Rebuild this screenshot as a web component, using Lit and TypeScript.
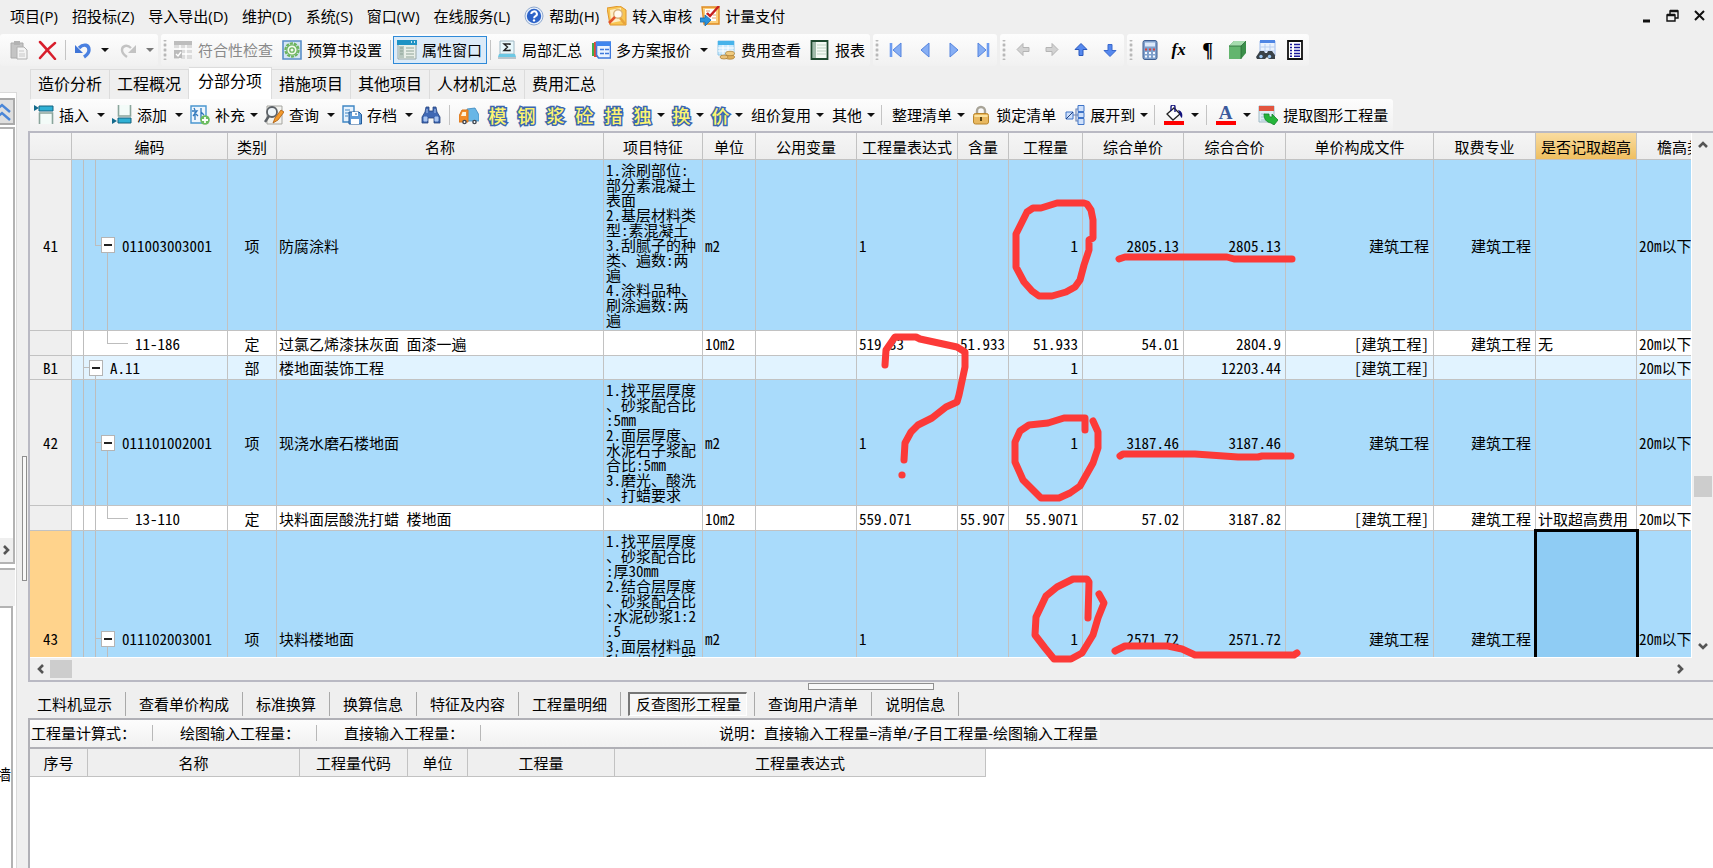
import { LitElement, html, svg, css, nothing, TemplateResult } from "lit";
import { customElement, property } from "lit/decorators.js";
import { classMap } from "lit/directives/class-map.js";

/* ---------- icons, all on a 20 x 20 grid ---------- */
const icons: Record<string, TemplateResult> = {
  help: svg`<circle cx="10" cy="10" r="9" fill="#e8f0fb" stroke="#8fa9cf"/><circle cx="10" cy="10" r="7.2" fill="#2d63c8"/><path d="M7.3 8a2.8 2.6 0 1 1 4.2 2.2c-1 .6-1.4 1-1.4 2" fill="none" stroke="#fff" stroke-width="2"/><circle cx="10" cy="14.4" r="1.2" fill="#fff"/>`,
  review: svg`<path d="M0 2l13-2 6 4v15L3 19z" fill="#f8c552" stroke="#e0962a"/><path d="M3 4l11-2v13l-10 2z" fill="#fdeec4"/><circle cx="11" cy="8" r="4.300" fill="#fffaf0" stroke="#d8b27a" stroke-width="1.400"/><path d="M8 11l-6 6" stroke="#e2522a" stroke-width="2.600"/><path d="M13 12l5 6" stroke="#e8a33a" stroke-width="2.600"/>`,
  pay: svg`<path d="M2 1h17v17H4z" fill="#fbcf7b" stroke="#e08c22" stroke-width="1.400"/><path d="M5 3h11v12H5z" fill="#fff"/><path d="M6 5h4M6 8h3M13 9h3M12 12h4" stroke="#e0a070"/><path d="M19 0l-9 10-3-3" fill="none" stroke="#c82020" stroke-width="2.400"/><path d="M0 12h5V9l6 5-6 6v-4H0z" fill="#2a93dc" stroke="#1867ad" stroke-width=".8"/>`,
  paste: svg`<path d="M2 3h12v15H2z" fill="#c4c4c4" stroke="#aaa"/><path d="M5 1h6v4H5z" fill="#b2b2b2"/><path d="M8 7h7l3 3v9H8z" fill="#f4f4f4" stroke="#b0b0b0"/><path d="M10 11h5M10 14h6M10 16h6" stroke="#c8c8c8"/>`,
  del: svg`<path d="M2 2c4 4 9 10 15 17M17 3C12 7 6 13 2 18" fill="none" stroke="#d81e2c" stroke-width="2.5" stroke-linecap="round"/>`,
  undo: svg`<path d="M6 8c5-5 10-3 10 2 0 3-2 5-5 7" fill="none" stroke="#4a80e0" stroke-width="3.400"/><path d="M2 5v8h8z" fill="#3f75d8"/>`,
  redo: svg`<path d="M13 8c-4-4-9-2-9 2 0 3 2 5 5 7" fill="none" stroke="#c3c3c3" stroke-width="2.4"/><path d="M18 5v8h-8z" fill="#c3c3c3"/>`,
  check: svg`<path d="M1 1h18v18H1z" fill="#dcdcdc"/><path d="M1 1h18v4H1z" fill="#bdbdbd"/><path d="M1 9h18M1 14h18M7 5v14M13 5v14" stroke="#fff" stroke-width="1.4"/><path d="M1 10h8v8H1z" fill="#bbb"/><path d="M3 14l2 2 3-4" fill="none" stroke="#fff" stroke-width="1.4"/>`,
  gear: svg`<path d="M1 1h18v18H1z" fill="#d5e6f5" stroke="#5a8fc8" stroke-width="1.600"/><circle cx="10" cy="10" r="6.600" fill="none" stroke="#6cb45e" stroke-width="2.200" stroke-dasharray="3.100 1"/><circle cx="10" cy="10" r="5.200" fill="#f3fbef" stroke="#6cb45e" stroke-width="1.200"/><circle cx="10" cy="10" r="2.200" fill="none" stroke="#6cb45e" stroke-width="1.300"/>`,
  props: svg`<path d="M1 1h18v18H1z" fill="#e9efe9" stroke="#97a7a7"/><path d="M0 0h20v5H0z" fill="#1f93c4"/><path d="M14 2h1M17 2h1" stroke="#fff" stroke-width="1.4"/><path d="M2 6h5v12H2z" fill="#b8c8c0"/><path d="M9 8h8M9 11h8M9 14h8M9 17h8M3 8h3M3 11h3M3 14h3" stroke="#8fa498"/>`,
  sigma: svg`<path d="M3 1h14v13H3z" fill="#e8f7fb" stroke="#9fb8c4"/><path d="M13 5V4H7l3.500 3L7 10.500h6v-1" fill="none" stroke="#222" stroke-width="1.400"/><path d="M2 14h16l1 3H1z" fill="#6cc8e4"/><path d="M1 17h18v2H1z" fill="#b9c4ca"/>`,
  plans: svg`<path d="M1 3h5v13H1z" fill="#3fae49"/><path d="M3 2h4v15H3z" fill="#e34b35"/><path d="M5.500 2h14v16h-12l-2-3z" fill="#eaf3ff" stroke="#3f79dc" stroke-width="1.600"/><path d="M5 2h15v4H5z" fill="#3f86ee"/><path d="M9 9.500h4M14 9.500h4M9 13.500h4M14 13.500h4" stroke="#3f79dc" stroke-width="1.500"/>`,
  fee: svg`<path d="M2 1h16v14H2z" fill="#cdeafc" stroke="#8ec6e8"/><path d="M2 1h16v4H2z" fill="#46b3ea"/><path d="M2 8h16M2 11h16M7 5v10M12 5v10" stroke="#fff"/><ellipse cx="14" cy="17" rx="4.500" ry="2.200" fill="#e0b05a" stroke="#a87a2c" stroke-width=".7"/><ellipse cx="14" cy="13.500" rx="4.500" ry="2.200" fill="#f0cb80" stroke="#a87a2c" stroke-width=".7"/><ellipse cx="8" cy="17" rx="4" ry="2" fill="#eac27a" stroke="#a87a2c" stroke-width=".7"/>`,
  report: svg`<path d="M1.500 1h16v18h-16z" fill="#f4faf4" stroke="#1f4a30" stroke-width="1.800"/><path d="M3 2v16M5 2v16" stroke="#4f7f62"/><path d="M7 5h9M7 8h9M7 11h9M7 14h9" stroke="#bcd3c2"/>`,
  first: svg`<path d="M5 3v14" stroke="#6d9cf0" stroke-width="2.600"/><path d="M15 3v14L7 10z" fill="#86aef4" stroke="#5584de"/>`,
  prev: svg`<path d="M14 3v14L6 10z" fill="#86aef4" stroke="#5584de"/>`,
  next: svg`<path d="M6 3v14l8-7z" fill="#86aef4" stroke="#5584de"/>`,
  last: svg`<path d="M15 3v14" stroke="#6d9cf0" stroke-width="2.600"/><path d="M5 3v14l8-7z" fill="#86aef4" stroke="#5584de"/>`,
  left: svg`<path d="M4 9.500l6-6v4h6v4h-6v4z" fill="#d2d2d2" stroke="#b4b4b4"/>`,
  right: svg`<path d="M16 9.500l-6-6v4H4v4h6v4z" fill="#d2d2d2" stroke="#b4b4b4"/>`,
  up: svg`<path d="M10 3.500l6 6h-4v6H8v-6H4z" fill="#5588ee" stroke="#2a59bd"/>`,
  down: svg`<path d="M10 16.500l6-6h-4v-6H8v6H4z" fill="#5588ee" stroke="#3a69cd"/>`,
  calc: svg`<rect x="3" y="0.500" width="14" height="19" rx="2" fill="#7fa0cc" stroke="#3f5f92"/><path d="M5 2.500h10v4H5z" fill="#dbe9fb"/><path d="M5 9.500h2M9 9.500h2M13 9.500h2" stroke="#d8413a" stroke-width="2"/><path d="M5 13h2M9 13h2M13 13h2M5 16.500h2M9 16.500h2M13 16.500h2" stroke="#f3f7ff" stroke-width="2"/>`,
  cube: svg`<path d="M2 6l5-5h12v12l-5 6H2z" fill="#3b8f4a"/><path d="M2 6h12v13H2z" fill="#63b56e"/><path d="M2 6l5-5h12l-5 5z" fill="#a6dcae"/><path d="M2 6h12v13M14 6l5-5" fill="none" stroke="#2a6b36" stroke-width=".8"/>`,
  findtable: svg`<path d="M4 1h15v15H4z" fill="#eaf2fd" stroke="#9fbcec"/><path d="M4 0h15v3H4z" fill="#4f86e4"/><path d="M4 7h15M4 11h15M9 4v11M14 4v11" stroke="#b9cff0"/><path d="M0 17l4-6h4l1 2h2l1-2h4l3 4v4h-6l-2-2-2 2H1z" fill="#3a4248"/><circle cx="5" cy="16.500" r="1.700" fill="#9cc8f3"/><circle cx="13.500" cy="16.500" r="1.700" fill="#9cc8f3"/>`,
  listdoc: svg`<path d="M3 1h14v18H3z" fill="#fff" stroke="#111" stroke-width="1.800"/><path d="M5 4.500h2M5 7.500h2M5 10.500h2M5 13.500h2M5 16.200h2M9 4.500h6M9 7.500h6M9 10.500h6M9 13.500h6M9 16.200h6" stroke="#1a1a9a" stroke-width="1.400"/>`,
  insert: svg`<path d="M0 0l5 3-5 3z" fill="#146a8c"/><path d="M5 1h14v5H5z" fill="#2fb0d4" stroke="#14627f"/><path d="M5.500 19V8h13v11" fill="#f3fbf8" stroke="#8aa59c" stroke-width="1.600"/>`,
  add: svg`<path d="M6.500 0v11h12V0" fill="#f3fbf8" stroke="#8aa59c" stroke-width="1.600"/><path d="M6 13h13v5H6z" fill="#2fb0d4" stroke="#14627f"/><path d="M0 13l5 3-5 3z" fill="#146a8c"/>`,
  supply: svg`<path d="M1 1h15v17H1z" fill="#eef6fd" stroke="#4a96d0" stroke-width="1.400"/><path d="M4 3l1 2M2 6h5L3 11M5 7v8M6 9l2 2M11 3v12M11 7l3 3" fill="none" stroke="#2f78bc" stroke-width="1.300"/><circle cx="15" cy="15" r="4.800" fill="#6cbc5f"/><path d="M12 15h6M15 12v6" stroke="#fff" stroke-width="1.800"/>`,
  query: svg`<path d="M3 1h15v18H3z" fill="#f2f2ee" stroke="#a5a5a0"/><circle cx="8" cy="7" r="5" fill="#eef4f8" stroke="#5c6166" stroke-width="1.800"/><path d="M5 11l-4 6" stroke="#5c6166" stroke-width="2.400"/><path d="M9 18l2-5 6-8 3 2-6 8z" fill="#f39a2b" stroke="#a85b10" stroke-width=".8"/>`,
  archive: svg`<path d="M1 1h11v16H1z" fill="#e6f2fd" stroke="#3f86c4" stroke-width="1.400"/><path d="M3 5h5M3 8h4M3 11h3" stroke="#3f86c4"/><path d="M7 7h10l2.500 2.500V19H7z" fill="#5f9bd8" stroke="#225a98"/><path d="M10 7h6v4h-6zM9 14h8v5H9z" fill="#fff"/><path d="M14 8v2" stroke="#225a98"/>`,
  find: svg`<path d="M5 2h3v4h4V2h3l1 5 3 5v6h-6v-5H7v5H1v-6l3-5z" fill="#3f68b4" stroke="#27457f" stroke-width=".8"/><path d="M3 12h3v4H3zM14 12h3v4h-3zM6 4v4M14 4v4" fill="#a8c4f0" stroke="#a8c4f0"/>`,
  truck: svg`<path d="M8 4l8-1 4 7v6H8z" fill="#68b6e6" stroke="#3a86bc" stroke-width=".8"/><path d="M3 5h6v12H0v-6z" fill="#f28c28" stroke="#d8761c"/><path d="M3.500 7H7v4H2z" fill="#fff1d8"/><circle cx="5.500" cy="17" r="2.300" fill="#3f4650"/><circle cx="15.500" cy="17" r="2.300" fill="#3f4650"/><circle cx="5.500" cy="17" r=".9" fill="#fff"/><circle cx="15.500" cy="17" r=".9" fill="#fff"/>`,
  lock: svg`<path d="M6 9V6a4 4 0 0 1 8 0v3" fill="none" stroke="#a8a498" stroke-width="2.400"/><rect x="2.500" y="8.500" width="15" height="10.500" rx="2" fill="#e8b860" stroke="#b9852a"/><path d="M3.500 11h13" stroke="#fbe3a0" stroke-width="2"/><path d="M10 12v4" stroke="#5b4312" stroke-width="2"/>`,
  expand: svg`<path d="M8 10h6M11 10V4h3M11 10v6h3" fill="none" stroke="#6f86b4" stroke-width="1.200"/><path d="M1 7h7v7H1zM13 0.500h6v6h-6zM13 7.500h6v5h-6zM13 13.500h6v6h-6z" fill="#cfe0fa" stroke="#3f74c8"/><path d="M1 14l7-7" stroke="#203f7c"/>`,
  bucket: svg`<path d="M3 9l7-6 6 6-7 6z" fill="#fff" stroke="#222" stroke-width="1.300"/><path d="M7 6V2a2 2 0 0 1 4 0v5" fill="none" stroke="#1a1a80" stroke-width="1.400"/><path d="M14 5c4 1 5 4 4 8-2-1-2-4-4-8z" fill="#10107c"/><path d="M0 16h20v4H0z" fill="#f00"/>`,
  extract: svg`<path d="M1 1h15v16H1z" fill="#dfeef4" stroke="#9fb9c4"/><path d="M1 1h15v5H1z" fill="#e2553f"/><path d="M3 9h4M3 12h4M3 15h5" stroke="#a8c4d0"/><path d="M6 9h5c0 3 1 3 3 3v-3l6 6-4 5-3-2c-5-1-7-4-7-9z" fill="#25b53a" stroke="#12842a" stroke-width=".8"/>`,
};

const icon = (name: string) =>
  html`<svg class="ico" viewBox="0 0 20 20" width="20" height="20" aria-hidden="true">${icons[name]}</svg>`;

const chevron = (dir: "up" | "down" | "left" | "right") => {
  const d = { up: "M2 8l4-4 4 4", down: "M2 4l4 4 4-4", left: "M8 2L4 6l4 4", right: "M4 2l4 4-4 4" }[dir];
  return html`<svg viewBox="0 0 12 12" width="12" height="12" aria-hidden="true"><path d=${d} fill="none" stroke="#555" stroke-width="2.600"/></svg>`;
};

const shared = css`
  * { box-sizing: border-box; }
  button {
    font: inherit; color: inherit; background: none; border: 0; margin: 0; padding: 0;
    display: inline-flex; align-items: center; justify-content: center; white-space: nowrap; flex: none;
  }
  svg { display: block; flex: none; }
`;

/* ---------- toolbars ---------- */
type Tool =
  | { k: "text"; icon?: string; label: string; state?: "pressed" | "disabled" }
  | { k: "icon"; icon?: string; glyph?: string; style?: string; label: string }
  | { k: "caret"; narrow?: boolean; dim?: boolean }
  | { k: "sep" };

const T = (label: string, ic?: string, state?: "pressed" | "disabled"): Tool => ({ k: "text", icon: ic, label, state });
const I = (ic: string, label: string): Tool => ({ k: "icon", icon: ic, label });
const G = (glyph: string, style: string, label: string): Tool => ({ k: "icon", glyph, style, label });
const SEP: Tool = { k: "sep" };
const CARET: Tool = { k: "caret" };
const NARROW: Tool = { k: "caret", narrow: true };

@customElement("tool-group")
class ToolGroup extends LitElement {
  @property({ attribute: false }) tools: Tool[] = [];
  @property({ type: Boolean }) grip = false;

  static styles = [shared, css`
    :host { display: flex; align-items: center; height: 32px; flex: none; border-radius: 3px;
      background: linear-gradient(#fdfdfd, #f1f1f1); }
    .grip { width: 8px; height: 20px; flex: none;
      background: radial-gradient(circle, #b4b4b4 1px, transparent 2px) center / 4px 5px repeat-y; }
    .text { height: 28px; padding: 0 5px 0 4px; gap: 5px; }
    .plain { padding-left: 6px; }
    .pressed { background: #dcebf8; box-shadow: inset 0 0 0 1px #2f8ad8; }
    .disabled { color: #8a8a8a; }
    .icon { width: 29px; height: 28px; }
    .sep { width: var(--sep, 6px); height: 20px; flex: none;
      background: linear-gradient(#c4c4c4, #c4c4c4) center / 1px 100% no-repeat; }
    .caret { width: var(--caret, 16px); height: 28px; }
    .narrow { width: 10px; justify-content: flex-start; }
    .dim { opacity: .55; }
    .seal { font: 500 18px/20px "Noto Sans CJK SC", sans-serif; color: #fdf470;
      -webkit-text-stroke: 3px #3a66b0; paint-order: stroke fill; }
    .fx { font: italic 700 17px/20px "Liberation Serif", serif; }
    .pilcrow { font: 700 20px/20px "Liberation Serif", serif; }
    .letter { font: 700 19px/16px "Liberation Serif", serif; color: #3c5a9c; width: 20px; border-bottom: 4px solid #f00; }
  `];

  private tool(t: Tool) {
    switch (t.k) {
      case "sep": return html`<span class="sep"></span>`;
      case "caret":
        return html`<button class=${classMap({ caret: true, narrow: !!t.narrow, dim: !!t.dim })} aria-label="▾">
          <svg viewBox="0 0 8 4" width="8" height="4"><path d="M0 0h8L4 4z" fill="#111"/></svg></button>`;
      case "icon":
        return html`<button class="icon" title=${t.label}>${t.icon ? icon(t.icon) : html`<span class=${t.style ?? ""}>${t.glyph}</span>`}</button>`;
      default:
        return html`<button class=${classMap({ text: true, plain: !t.icon, pressed: t.state === "pressed", disabled: t.state === "disabled" })}
          ?disabled=${t.state === "disabled"}>${t.icon ? icon(t.icon) : nothing}<span>${t.label}</span></button>`;
    }
  }

  render() {
    return html`${this.grip ? html`<span class="grip"></span>` : nothing}${this.tools.map((t) => this.tool(t))}`;
  }
}

const mainBar: { grip: boolean; tools: Tool[] }[] = [
  { grip: false, tools: [I("paste", "粘贴"), I("del", "删除"), SEP, I("undo", "撤销"), CARET, I("redo", "恢复"), { k: "caret", dim: true }] },
  { grip: true, tools: [T("符合性检查", "check", "disabled"), T("预算书设置", "gear"), SEP, T("属性窗口", "props", "pressed"), SEP,
    T("局部汇总", "sigma"), T("多方案报价", "plans"), CARET, T("费用查看", "fee"), T("报表", "report")] },
  { grip: true, tools: [I("first", "首行"), I("prev", "上一行"), I("next", "下一行"), I("last", "末行")] },
  { grip: true, tools: [I("left", "左移"), I("right", "右移"), I("up", "上移"), I("down", "下移")] },
  { grip: true, tools: [I("calc", "计算器"), G("fx", "fx", "函数"), G("¶", "pilcrow", "段落"), I("cube", "图形"), I("findtable", "查找"), I("listdoc", "清单")] },
];

const seal = (c: string) => G(c, "seal", c);
const editBar: Tool[] = [
  T("插入", "insert"), CARET, T("添加", "add"), CARET, T("补充", "supply"), NARROW, T("查询", "query"), CARET,
  T("存档", "archive"), CARET, I("find", "查找"), SEP, I("truck", "运输"), seal("模"), seal("钢"), seal("浆"), seal("砼"), seal("措"),
  seal("独"), NARROW, seal("换"), NARROW, seal("价"), NARROW, T("组价复用"), NARROW, T("其他"), NARROW, SEP,
  T("整理清单"), NARROW, T("锁定清单", "lock"), T("展开到", "expand"), NARROW, SEP, I("bucket", "填充颜色"), CARET, SEP,
  G("A", "letter", "字体颜色"), CARET, T("提取图形工程量", "extract"),
];

/* ---------- bill of quantities ---------- */
interface Row {
  no: string; kind: "item" | "quota" | "part"; guides: string[]; code: string; type: string; name: string;
  feature?: string[]; unit?: string; expr?: string; content?: string; qty: string; price?: string; total: string;
  file: string; trade?: string; high?: string; active?: boolean;
}

const columns: [string, number][] = [
  ["", 42], ["编码", 156], ["类别", 49], ["名称", 327], ["项目特征", 99], ["单位", 53], ["公用变量", 101], ["工程量表达式", 101],
  ["含量", 51], ["工程量", 74], ["综合单价", 101], ["综合合价", 102], ["单价构成文件", 148], ["取费专业", 102], ["是否记取超高", 101], ["檐高类型", 101],
];

const rows: Row[] = [
  { no: "41", kind: "item", guides: ["line", "last"], code: "011003003001", type: "项", name: "防腐涂料",
    feature: ["1.涂刷部位:", "部分素混凝土", "表面", "2.基层材料类", "型:素混凝土", "3.刮腻子的种", "类、遍数:两", "遍", "4.涂料品种、", "刷涂遍数:两", "遍"],
    unit: "m2", expr: "1", qty: "1", price: "2805.13", total: "2805.13", file: "建筑工程", trade: "建筑工程" },
  { no: "", kind: "quota", guides: ["line", "none"], code: "11-186", type: "定", name: "过氯乙烯漆抹灰面 面漆一遍", unit: "10m2",
    expr: "519.33", content: "51.933", qty: "51.933", price: "54.01", total: "2804.9", file: "[建筑工程]", trade: "建筑工程", high: "无" },
  { no: "B1", kind: "part", guides: ["tee"], code: "A.11", type: "部", name: "楼地面装饰工程", qty: "1", total: "12203.44", file: "[建筑工程]" },
  { no: "42", kind: "item", guides: ["line", "tee"], code: "011101002001", type: "项", name: "现浇水磨石楼地面",
    feature: ["1.找平层厚度", "、砂浆配合比", ":5mm", "2.面层厚度、", "水泥石子浆配", "合比:5mm", "3.磨光、酸洗", "、打蜡要求"],
    unit: "m2", expr: "1", qty: "1", price: "3187.46", total: "3187.46", file: "建筑工程", trade: "建筑工程" },
  { no: "", kind: "quota", guides: ["line", "line"], code: "13-110", type: "定", name: "块料面层酸洗打蜡 楼地面", unit: "10m2",
    expr: "559.071", content: "55.907", qty: "55.9071", price: "57.02", total: "3187.82", file: "[建筑工程]", trade: "建筑工程", high: "计取超高费用" },
  { no: "43", kind: "item", guides: ["line", "tee"], code: "011102003001", type: "项", name: "块料楼地面",
    feature: ["1.找平层厚度", "、砂浆配合比", ":厚30mm", "2.结合层厚度", "、砂浆配合比", ":水泥砂浆1:2", ".5", "3.面层材料品", "种、规格、颜", "色", "4.嵌缝材料种", "类", "5.防护层材料", "种类"],
    unit: "m2", expr: "1", qty: "1", price: "2571.72", total: "2571.72", file: "建筑工程", trade: "建筑工程", active: true },
];

@customElement("bill-grid")
class BillGrid extends LitElement {
  static styles = [shared, css`
    :host { display: grid; grid-template: minmax(0, 1fr) 22px / minmax(0, 1fr) 22px; min-height: 0; background: #efefef;
      border: solid #b9b9c3; border-width: 2px 0 2px 2px; }
    .view { overflow: hidden; background: #fff; border-bottom: 1px solid #fff; }
    table { border-collapse: separate; border-spacing: 0; table-layout: fixed; width: max-content; }
    th, td { padding: 0; height: 1px; border: solid #c2c2c2; border-width: 0 1px 1px 0; white-space: nowrap; overflow: hidden;
      font: 400 15px/15px "Noto Sans CJK SC", sans-serif; font-feature-settings: "hwid"; }
    thead th { height: 27px; background: linear-gradient(#f5f5f5, #ededed); }
    thead .lit { background: linear-gradient(#f9dca0, #efbf60); }
    tbody th { background: #efefef; }
    tbody .current { background: #ffd38c; }
    .quota { height: 25px; }
    .part { height: 24px; background: #e1f3ff; }
    .item { background: #a9dbfb; }
    td { padding: 0 4px 0 2px; }
    .mid { text-align: center; padding: 0; }
    .num { text-align: right; }
    .feature { padding: 2px 0 3px 2px; white-space: pre; }
    .active { background: #8fccf4; outline: 3px solid #000; outline-offset: -1px; position: relative; overflow: visible; }
    .code { padding: 0 0 0 5px; }
    .tree { display: flex; align-items: center; height: 100%; }
    .g { width: 12px; height: 100%; flex: none; background-repeat: no-repeat; --c: linear-gradient(#bdbdbd, #bdbdbd); }
    .line { background-image: var(--c); background-position: 6px 0; background-size: 1px 100%; }
    .tee { background-image: var(--c), var(--c); background-position: 6px 0, right center; background-size: 1px 100%, 6px 1px; }
    .last { background-image: var(--c), var(--c); background-position: 6px 0, right center; background-size: 1px 50%, 6px 1px; }
    .leaf { width: 27px; margin-right: 7px; background-image: var(--c), var(--c); background-position: 6px 0, right center; background-size: 1px 50%, 21px 1px; }
    .node { width: 14px; margin-right: 7px; display: flex; align-items: center; background-image: var(--c);
      background-position: 6px bottom; background-size: 1px 50%; }
    .fold { width: 14px; height: 16px; background: #fff; border: 1px solid #b4b4b4; }
    .fold::before { content: ""; width: 8px; height: 2px; background: #222; }
    .vbar { display: flex; flex-direction: column; align-items: center; border-left: 1px solid #fff; padding: 3px 0; }
    .hbar { display: flex; align-items: center; padding: 0 2px; }
    .vbar button, .hbar button { width: 18px; height: 18px; }
    .above { flex: 329; } .below { flex: 143; }
    .vthumb { width: 18px; height: 21px; background: #cdcdcd; }
    .hthumb { width: 22px; height: 18px; background: #cdcdcd; }
    .rest { flex: 1; }
  `];

  private row(r: Row) {
    return html`<tr class=${r.kind}>
      <th scope="row" class=${classMap({ current: !!r.active })}>${r.no}</th>
      <td class="code"><div class="tree">${r.guides.map((g) => html`<span class="g ${g}"></span>`)}
        ${r.kind === "quota" ? html`<span class="g leaf"></span>` : html`<span class="g node"><button class="fold" aria-label="折叠"></button></span>`}
        <span>${r.code}</span></div></td>
      <td class="mid">${r.type}</td><td>${r.name}</td><td class="feature">${r.feature?.join("\n")}</td><td>${r.unit}</td><td></td><td>${r.expr}</td>
      <td class="num">${r.content}</td><td class="num">${r.qty}</td><td class="num">${r.price}</td><td class="num">${r.total}</td>
      <td class="num">${r.file}</td><td class="num">${r.trade}</td><td class=${classMap({ active: !!r.active })}>${r.high}</td><td>20m以下</td>
    </tr>`;
  }

  render() {
    const total = columns.reduce((s, c) => s + c[1], 0);
    return html`
      <div class="view"><table style="width:${total}px">
        <colgroup>${columns.map((c) => html`<col style="width:${c[1]}px">`)}</colgroup>
        <thead><tr>${columns.map((c, i) => html`<th scope="col" class=${classMap({ lit: i === 14 })}>${c[0]}</th>`)}</tr></thead>
        <tbody>${rows.map((r) => this.row(r))}</tbody>
      </table></div>
      <div class="vbar"><button aria-label="向上滚动">${chevron("up")}</button><span class="above"></span><span class="vthumb"></span><span class="below"></span><button aria-label="向下滚动">${chevron("down")}</button></div>
      <div class="hbar"><button aria-label="向左滚动">${chevron("left")}</button><span class="hthumb"></span><span class="rest"></span><button aria-label="向右滚动">${chevron("right")}</button></div>`;
  }
}

/* ---------- hand-drawn marks laid over the sheet ---------- */
const strokes = [
  "M1084 203H1057L1041 208L1033 208L1027 212L1022 222L1016 234V267L1024 282L1032 291L1039 296H1052L1066 292L1075 287L1080 280L1084 265L1089 250V240L1093 238V220L1091 210L1087 204Z",
  "M1119 259L1125 257H1227L1234 259H1292",
  "M885 365L886 350L895 337H916L920 339L957 347L965 352V367L959 395L957 402L946 407L932 418L918 425L911 432L905 443L904 460",
  "M1085 430V418H1064L1048 423L1029 425L1020 431L1015 442V462L1023 480L1041 498H1059L1070 493L1080 486L1093 463L1098 448V432L1093 421",
  "M1120 456L1123 454H1195L1238 457H1258L1262 456H1291",
  "M1088 618L1089 582L1087 579H1073L1057 587L1046 596L1036 617L1035 635L1045 648L1054 659H1071L1082 653L1093 635L1098 618L1104 603L1099 594",
  "M1115 651L1125 646H1168L1182 649L1195 655H1294L1297 653",
];

const menus = ["项目(P)", "招投标(Z)", "导入导出(D)", "维护(D)", "系统(S)", "窗口(W)", "在线服务(L)"];
const sheetTabs = ["造价分析", "工程概况", "分部分项", "措施项目", "其他项目", "人材机汇总", "费用汇总"];
const detailTabs = ["工料机显示", "查看单价构成", "标准换算", "换算信息", "特征及内容", "工程量明细", "反查图形工程量", "查询用户清单", "说明信息"];
const detailCols: [string, number][] = [["序号", 58], ["名称", 212], ["工程量代码", 108], ["单位", 60], ["工程量", 147], ["工程量表达式", 371]];

@customElement("app-root")
class AppRoot extends LitElement {
  static styles = [shared, css`
    :host { display: flex; flex-direction: column; height: 100vh; position: relative; overflow: hidden; background: #efefef; color: #000;
      font: 15px/20px "Open Sans", "Noto Sans CJK SC", sans-serif; }
    .menu { display: flex; align-items: center; gap: 14px; height: 34px; padding: 0 5px 3px 10px; flex: none; }
    .menu button { gap: 5px; }
    .menu .withicon { margin-left: -6px; }
    .win { display: flex; gap: 8px; margin-left: auto; }
    .win button { width: 18px; height: 18px; }
    .bar { display: flex; gap: 3px; height: 32px; flex: none; }
    .bar tool-group:first-child { padding-left: 4px; }
    .body { display: flex; flex: 1; min-height: 0; }
    .side { width: 28px; flex: none; display: flex; margin-top: 26px; }
    .panes { width: 17px; flex: none; display: flex; flex-direction: column; overflow: hidden; border: solid #dadada; border-width: 1px 1px 0 0; background: #fff; }
    .collapse { width: 15px; height: 27px; margin: 5px 0 2px; background: #dfdfdf; border: solid #aaa; border-width: 2px 2px 2px 0; }
    .nav { width: 15px; flex: 1; display: flex; align-items: flex-end; border: solid #b3b3b3; border-width: 2px 2px 2px 0; }
    .nav button { width: 13px; height: 24px; background: #efefef; justify-content: flex-start; }
    .strip { width: 15px; height: 38px; flex: none; margin-top: 4px; background: #efefef; border-top: 2px solid #b3b3b3; }
    .preview { width: 13px; flex: 0 0 262px; display: flex; align-items: center; justify-content: flex-end; overflow: hidden; padding-top: 72px; border: solid #b3b3b3; border-width: 2px 2px 0 0; }
    .vsplit { flex: 1; display: flex; flex-direction: column; align-items: center; padding-left: 3px; }
    .vsplit .before { flex: 364; } .vsplit .after { flex: 287; }
    .vhandle { width: 5px; height: 125px; border: 1px solid #8f8f8f; background: #f8f8f8; }
    .main { flex: 1; min-width: 0; display: flex; flex-direction: column; }
    .tabs { display: flex; align-items: flex-end; height: 33px; padding-left: 2px; flex: none; }
    .tabs button { height: 30px; padding: 0 7px 2px; font-size: 16px; border: solid #dcdcdc; border-width: 1px 1px 0 0; }
    .tabs button:first-child { border-left-width: 1px; }
    .tabs .on { height: 32px; padding: 0 9px 5px; background: #fff; }
    .edit { display: flex; height: 32px; padding-left: 2px; flex: none; --sep: 9px; --caret: 14px; }
    bill-grid { flex: 1; }
    .hsplit { display: flex; justify-content: center; height: 8px; flex: none; padding-top: 1px; }
    .hhandle { width: 126px; height: 7px; border: 1px solid #8f8f8f; background: #f8f8f8; }
    .details { display: flex; align-items: center; height: 28px; flex: none; }
    .details button { height: 24px; padding: 0 13px; border-right: 1px solid #a9a9a9; }
    .details button:first-child { padding-left: 9px; }
    .details .on { padding: 0 7px; }
    .details .on span { border: solid; border-width: 2px 1px 1px 2px; border-color: #777 #fff #fff #777; background: #f7f7f7; padding: 0 5px 0 6px; line-height: 21px; }
    .info { display: flex; align-items: center; height: 31px; flex: none; border: solid #b0b0b6; border-width: 2px 0 2px 2px; }
    .fields { display: flex; align-items: center; height: 27px; padding: 0 2px 1px 1px; background: linear-gradient(#fdfdfd, #f1f1f1); }
    .fields span { flex: none; white-space: nowrap; }
    .fields i { width: 1px; height: 16px; margin: 0 27px 0 16px; background: #b8b8b8; flex: none; }
    .note { padding-left: 211px; }
    .result { height: 119px; flex: none; background: #fff; border-left: 2px solid #b0b0b6; }
    .result table { border-spacing: 0; table-layout: fixed; width: 956px; }
    .result th { height: 28px; padding: 0; font-weight: 400; background: #efefef; border: solid #c2c2c2; border-width: 0 1px 1px 0; }
    .ink { position: absolute; left: 0; top: 0; pointer-events: none; }
  `];

  render() {
    return html`
      <nav class="menu">
        ${menus.map((m) => html`<button>${m}</button>`)}
        <button>${icon("help")}<span>帮助(H)</span></button>
        <button class="withicon">${icon("review")}<span>转入审核</span></button>
        <button class="withicon">${icon("pay")}<span>计量支付</span></button>
        <span class="win">
          <button aria-label="最小化"><svg viewBox="0 0 18 18" width="18" height="18"><path d="M5 14h7" stroke="#111" stroke-width="3"/></svg></button>
          <button aria-label="还原"><svg viewBox="0 0 18 18" width="18" height="18"><path d="M6 7V4h8v7h-3M3 8h8v6H3z" fill="none" stroke="#111" stroke-width="1.4"/><path d="M6 4h8M3 8h8" stroke="#111" stroke-width="2.4"/></svg></button>
          <button aria-label="关闭"><svg viewBox="0 0 18 18" width="18" height="18"><path d="M5 4l9 9M14 4l-9 9" stroke="#111" stroke-width="2"/></svg></button>
        </span>
      </nav>
      <div class="bar">${mainBar.map((g) => html`<tool-group .tools=${g.tools} ?grip=${g.grip}></tool-group>`)}</div>
      <div class="body">
        <aside class="side">
          <div class="panes">
            <button class="collapse" aria-label="收起"><svg viewBox="0 0 13 22" width="13" height="22"><path d="M-6 11L2 4l8 7M-6 19L2 12l8 7" fill="none" stroke="#4a86d8" stroke-width="2.4"/></svg></button>
            <div class="nav"><button aria-label="展开">${chevron("right")}</button></div>
            <div class="strip"></div>
            <div class="preview"><span>墙</span></div>
          </div>
          <div class="vsplit"><span class="before"></span><span class="vhandle"></span><span class="after"></span></div>
        </aside>
        <main class="main">
          <div class="tabs" role="tablist">${sheetTabs.map((t, i) => html`<button role="tab" class=${classMap({ on: i === 2 })}>${t}</button>`)}</div>
          <div class="edit"><tool-group .tools=${editBar}></tool-group></div>
          <bill-grid></bill-grid>
          <div class="hsplit"><span class="hhandle"></span></div>
          <div class="details" role="tablist">${detailTabs.map((t, i) => html`<button role="tab" class=${classMap({ on: i === 6 })}><span>${t}</span></button>`)}</div>
          <div class="info"><div class="fields">
            <span>工程量计算式：</span><i></i><span>绘图输入工程量：</span><i></i><span>直接输入工程量：</span><i></i>
            <span class="note">说明：直接输入工程量=清单/子目工程量-绘图输入工程量</span>
          </div></div>
          <div class="result"><table>
            <colgroup>${detailCols.map((c) => html`<col style="width:${c[1]}px">`)}</colgroup>
            <thead><tr>${detailCols.map((c) => html`<th scope="col">${c[0]}</th>`)}</tr></thead>
          </table></div>
        </main>
      </div>
      <svg class="ink" width="1713" height="868" viewBox="0 0 1713 868" aria-hidden="true">
        <g fill="none" stroke="#fc3a38" stroke-width="7" stroke-linecap="round" stroke-linejoin="round">${strokes.map((d) => svg`<path d=${d}/>`)}</g>
        <circle cx="902" cy="475" r="3.6" fill="#fc3a38"/>
      </svg>`;
  }
}
